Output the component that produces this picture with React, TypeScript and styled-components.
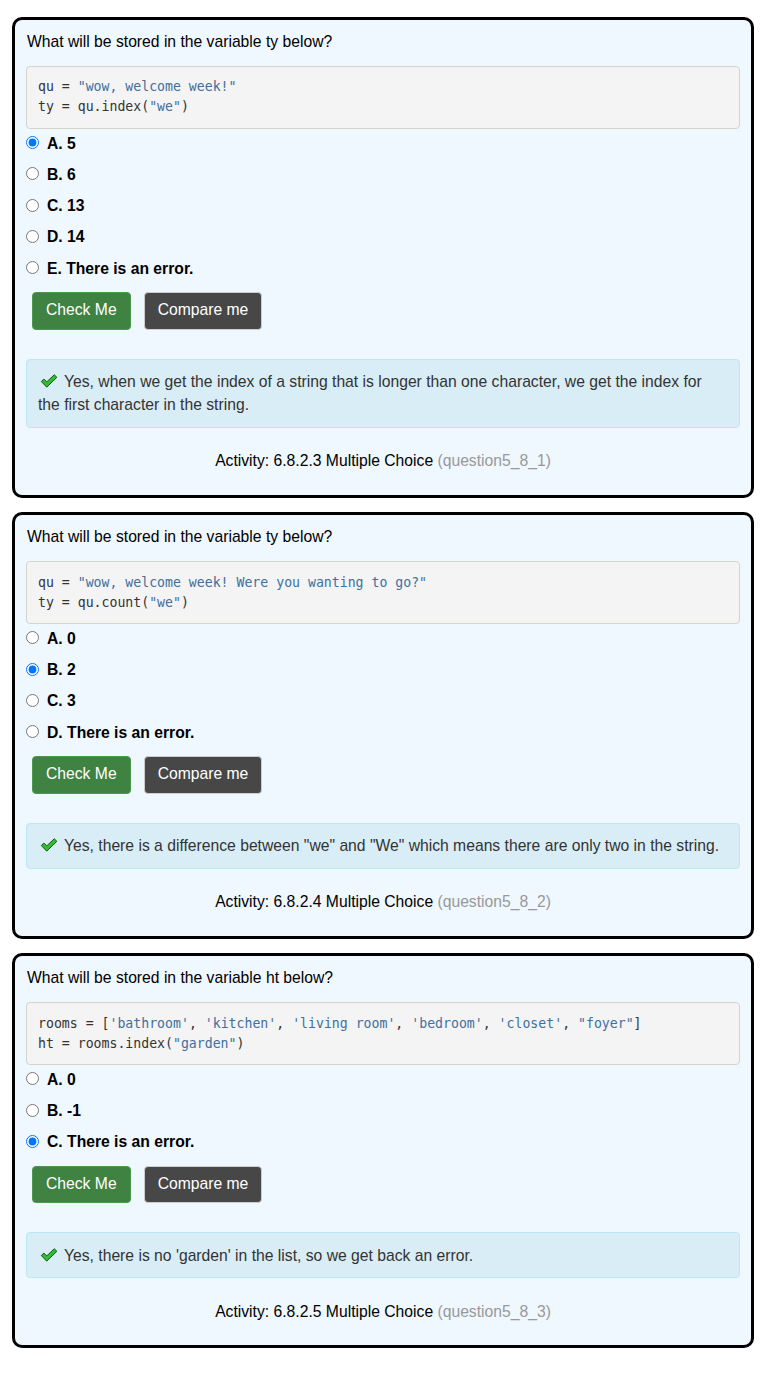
import React from "react";
import styled, { createGlobalStyle } from "styled-components";

const Global = createGlobalStyle`
  html, body { margin: 0; padding: 0; background: #ffffff; }
  body { font-family: "Liberation Sans", Arial, sans-serif; font-size: 15.7px; color: #000; }
`;

const Page = styled.div`
  display: flex;
  flex-direction: column;
  gap: 14.5px;
  padding: 17px 29px 30px 12px;
`;

const Card = styled.section`
  width: 742px;
  box-sizing: border-box;
  border: 3px solid #000;
  border-radius: 10px;
  background: #eff7ff;
  padding: 10.5px 11px 22.5px 11px;
`;

const Question = styled.p`
  margin: 0 0 12.5px 1px;
  line-height: 22.86px;
  color: #000;
`;

const Code = styled.pre`
  margin: 0;
  padding: 10.5px 11px 10.5px 11px;
  background: #f4f4f4;
  border: 1px solid #d4d4cc;
  border-radius: 4px;
  font-family: "DejaVu Sans Mono", "Liberation Mono", monospace;
  font-size: 13.2px;
  line-height: 20px;
  color: #333;
  white-space: pre;
`;

const Str = styled.span`
  color: #4070a0;
`;

const Options = styled.div`
  display: flex;
  flex-direction: column;
`;

const OptionRow = styled.label`
  display: flex;
  align-items: center;
  height: 23px;
  margin: 3.75px 0 4.5px 0;
  font-weight: bold;
  line-height: 22.86px;
`;

const Radio = styled.input`
  width: 13px;
  height: 13px;
  margin: 0 8px 3px 0;
  accent-color: #0075ff;
`;

const Buttons = styled.div`
  display: flex;
  gap: 13px;
  padding-left: 6px;
  margin: 6.75px 0 29px 0;
`;

const Button = styled.button<{ $variant: "green" | "dark" }>`
  font-family: "Liberation Sans", Arial, sans-serif;
  font-size: 15.7px;
  line-height: 22.86px;
  padding: 6.5px 13px;
  border-radius: 4px;
  color: #fff;
  border: 1px solid ${(p) => (p.$variant === "green" ? "#4b9a4b" : "#cccccc")};
  background: ${(p) => (p.$variant === "green" ? "#3f8241" : "#474747")};
`;

const Feedback = styled.div`
  background: #d9edf7;
  border: 1px solid #bce8f1;
  border-radius: 4px;
  padding: 10.5px 16px 10.5px 11px;
  line-height: 23px;
  color: #333;
`;

const CheckIcon = styled.svg`
  width: 18px;
  height: 14px;
  margin: 0 6px 0 2px;
  vertical-align: -1px;
`;

const Activity = styled.div`
  margin-top: 21.5px;
  text-align: center;
  line-height: 23px;
  color: #000;
`;

const Muted = styled.span`
  color: #999;
`;

type Q = {
  question: string;
  code: React.ReactNode;
  options: string[];
  selected: number;
  feedback: string;
  activity: string;
  id: string;
};

const questions: Q[] = [
  {
    question: "What will be stored in the variable ty below?",
    code: (
      <>
        qu = <Str>"wow, welcome week!"</Str>
        {"\n"}ty = qu.index(<Str>"we"</Str>)
      </>
    ),
    options: ["A. 5", "B. 6", "C. 13", "D. 14", "E. There is an error."],
    selected: 0,
    feedback:
      "Yes, when we get the index of a string that is longer than one character, we get the index for the first character in the string.",
    activity: "Activity: 6.8.2.3 Multiple Choice",
    id: "(question5_8_1)",
  },
  {
    question: "What will be stored in the variable ty below?",
    code: (
      <>
        qu = <Str>"wow, welcome week! Were you wanting to go?"</Str>
        {"\n"}ty = qu.count(<Str>"we"</Str>)
      </>
    ),
    options: ["A. 0", "B. 2", "C. 3", "D. There is an error."],
    selected: 1,
    feedback:
      'Yes, there is a difference between "we" and "We" which means there are only two in the string.',
    activity: "Activity: 6.8.2.4 Multiple Choice",
    id: "(question5_8_2)",
  },
  {
    question: "What will be stored in the variable ht below?",
    code: (
      <>
        rooms = [<Str>'bathroom'</Str>, <Str>'kitchen'</Str>, <Str>'living room'</Str>,{" "}
        <Str>'bedroom'</Str>, <Str>'closet'</Str>, <Str>"foyer"</Str>]
        {"\n"}ht = rooms.index(<Str>"garden"</Str>)
      </>
    ),
    options: ["A. 0", "B. -1", "C. There is an error."],
    selected: 2,
    feedback: "Yes, there is no 'garden' in the list, so we get back an error.",
    activity: "Activity: 6.8.2.5 Multiple Choice",
    id: "(question5_8_3)",
  },
];

const Check = () => (
  <CheckIcon viewBox="0 0 20 16">
    <polygon
      points="1.2,8.6 4.2,5.8 7.4,9 16,0.9 19,3.8 7.4,15"
      fill="#2fbf2f"
      stroke="#174d17"
      strokeWidth="1.1"
      strokeLinejoin="round"
    />
  </CheckIcon>
);

export default function App() {
  return (
    <>
      <Global />
      <Page>
        {questions.map((q, qi) => (
          <Card key={qi}>
            <Question>{q.question}</Question>
            <Code>{q.code}</Code>
            <Options>
              {q.options.map((o, oi) => (
                <OptionRow key={oi}>
                  <Radio type="radio" name={`q${qi}`} defaultChecked={oi === q.selected} />
                  {o}
                </OptionRow>
              ))}
            </Options>
            <Buttons>
              <Button $variant="green">Check Me</Button>
              <Button $variant="dark">Compare me</Button>
            </Buttons>
            <Feedback>
              <Check />
              {q.feedback}
            </Feedback>
            <Activity>
              {q.activity} <Muted>{q.id}</Muted>
            </Activity>
          </Card>
        ))}
      </Page>
    </>
  );
}
